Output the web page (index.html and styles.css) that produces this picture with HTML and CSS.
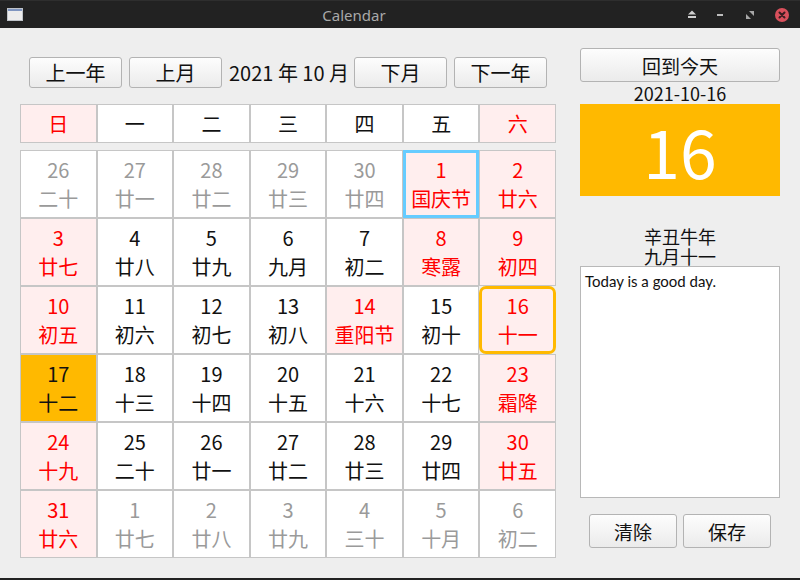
FILE: index.html
```html
<!DOCTYPE html>
<html lang="zh">
<head>
<meta charset="utf-8">
<title>Calendar</title>
<link rel="stylesheet" href="styles.css">
</head>
<body>
<div class="titlebar">
  <div class="app-icon">
    <svg width="16" height="13" viewBox="0 0 16 13"><rect x="0.5" y="0.5" width="15" height="12" fill="#ececec" stroke="#bfc3c9"/><rect x="1" y="1" width="14" height="2" fill="#7f95c0"/></svg>
  </div>
  <div class="title">Calendar</div>
  <div class="controls">
    <div class="ctl ctl-eject"><svg width="10" height="9" viewBox="0 0 10 9"><polygon points="1,4.5 5,0.5 9,4.5" fill="#cfcfcf"/><rect x="1" y="6" width="8" height="2" fill="#cfcfcf"/></svg></div>
    <div class="ctl ctl-min"><svg width="8" height="4" viewBox="0 0 8 4"><rect x="1" y="1" width="6" height="2" fill="#bdbdbd"/></svg></div>
    <div class="ctl ctl-max"><svg width="8" height="8" viewBox="0 0 8 8"><polygon points="3,0 8,0 8,5" fill="#a8a8a8"/><polygon points="0,3 0,8 5,8" fill="#a8a8a8"/></svg></div>
    <div class="ctl ctl-close"><svg width="16" height="16" viewBox="0 0 16 16"><circle cx="8" cy="8" r="7" fill="#d9505c"/><path d="M5.5 5.5 L10.5 10.5 M10.5 5.5 L5.5 10.5" stroke="#3a1d20" stroke-width="2" stroke-linecap="round"/></svg></div>
  </div>
</div>

<div class="window">
  <div class="left">
    <div class="nav">
      <button class="btn">上一年</button>
      <button class="btn">上月</button>
      <div class="month-label">2021 年 10 月</div>
      <button class="btn">下月</button>
      <button class="btn">下一年</button>
    </div>
    <div class="weekdays">
      <div class="wd weekend">日</div>
      <div class="wd">一</div>
      <div class="wd">二</div>
      <div class="wd">三</div>
      <div class="wd">四</div>
      <div class="wd">五</div>
      <div class="wd weekend">六</div>
    </div>
    <div class="grid">
      <div class="cell other"><span>26</span><span>二十</span></div>
      <div class="cell other"><span>27</span><span>廿一</span></div>
      <div class="cell other"><span>28</span><span>廿二</span></div>
      <div class="cell other"><span>29</span><span>廿三</span></div>
      <div class="cell other"><span>30</span><span>廿四</span></div>
      <div class="cell red selected"><span>1</span><span>国庆节</span></div>
      <div class="cell red"><span>2</span><span>廿六</span></div>

      <div class="cell red"><span>3</span><span>廿七</span></div>
      <div class="cell"><span>4</span><span>廿八</span></div>
      <div class="cell"><span>5</span><span>廿九</span></div>
      <div class="cell"><span>6</span><span>九月</span></div>
      <div class="cell"><span>7</span><span>初二</span></div>
      <div class="cell red"><span>8</span><span>寒露</span></div>
      <div class="cell red"><span>9</span><span>初四</span></div>

      <div class="cell red"><span>10</span><span>初五</span></div>
      <div class="cell"><span>11</span><span>初六</span></div>
      <div class="cell"><span>12</span><span>初七</span></div>
      <div class="cell"><span>13</span><span>初八</span></div>
      <div class="cell red"><span>14</span><span>重阳节</span></div>
      <div class="cell"><span>15</span><span>初十</span></div>
      <div class="cell red today"><span>16</span><span>十一</span></div>

      <div class="cell picked"><span>17</span><span>十二</span></div>
      <div class="cell"><span>18</span><span>十三</span></div>
      <div class="cell"><span>19</span><span>十四</span></div>
      <div class="cell"><span>20</span><span>十五</span></div>
      <div class="cell"><span>21</span><span>十六</span></div>
      <div class="cell"><span>22</span><span>十七</span></div>
      <div class="cell red"><span>23</span><span>霜降</span></div>

      <div class="cell red"><span>24</span><span>十九</span></div>
      <div class="cell"><span>25</span><span>二十</span></div>
      <div class="cell"><span>26</span><span>廿一</span></div>
      <div class="cell"><span>27</span><span>廿二</span></div>
      <div class="cell"><span>28</span><span>廿三</span></div>
      <div class="cell"><span>29</span><span>廿四</span></div>
      <div class="cell red"><span>30</span><span>廿五</span></div>

      <div class="cell red"><span>31</span><span>廿六</span></div>
      <div class="cell other"><span>1</span><span>廿七</span></div>
      <div class="cell other"><span>2</span><span>廿八</span></div>
      <div class="cell other"><span>3</span><span>廿九</span></div>
      <div class="cell other"><span>4</span><span>三十</span></div>
      <div class="cell other"><span>5</span><span>十月</span></div>
      <div class="cell other"><span>6</span><span>初二</span></div>
    </div>
  </div>

  <div class="right">
    <button class="btn today-btn">回到今天</button>
    <div class="date">2021-10-16</div>
    <div class="bigday">16</div>
    <div class="lunar">辛丑牛年<br>九月十一</div>
    <div class="note">Today is a good day.</div>
    <div class="actions">
      <button class="btn">清除</button>
      <button class="btn">保存</button>
    </div>
  </div>
</div>
<div class="frame-bottom"></div>
</body>
</html>
```

FILE: styles.css
```css
* { box-sizing: border-box; }
html, body { margin: 0; padding: 0; }
body {
  width: 800px;
  height: 580px;
  background: #eeeeee;
  font-family: "Noto Sans CJK SC", "Noto Sans", sans-serif;
  color: #111;
  display: flex;
  flex-direction: column;
  overflow: hidden;
}

/* title bar */
.titlebar {
  height: 28px;
  flex: none;
  background: #222222;
  border-top: 1px solid #2e2e2e;
  display: flex;
  align-items: center;
}
.app-icon { width: 30px; padding-left: 7px; display: flex; align-items: center; }
.title {
  flex: 1;
  text-align: center;
  color: #a9a9a9;
  font-family: "Noto Sans", sans-serif;
  font-size: 15px;
}
.controls { width: 122px; display: flex; align-items: center; height: 27px; }
.ctl { height: 27px; display: flex; align-items: center; justify-content: center; }
.ctl-eject, .ctl-min { width: 28px; }
.ctl-max, .ctl-close { width: 32px; }

/* main */
.window {
  flex: 1;
  display: flex;
  gap: 24px;
  padding: 0 20px;
}
.frame-bottom { height: 2px; flex: none; background: #222222; }

.left {
  width: 536px;
  padding-top: 29px;
  display: flex;
  flex-direction: column;
}

.btn {
  border: 1px solid #b3b3b3;
  border-radius: 3px;
  background: linear-gradient(#fdfdfd, #ebebeb);
  font-family: inherit;
  color: #111;
  padding: 0;
  display: flex;
  align-items: center;
  justify-content: center;
  line-height: 1;
}

.nav {
  display: flex;
  justify-content: center;
  align-items: center;
  gap: 7px;
  height: 31px;
}
.nav .btn { width: 93px; height: 31px; font-size: 20px; }
.month-label { width: 118px; text-align: center; font-size: 20px; white-space: nowrap; }

.weekdays {
  margin-top: 16px;
  display: grid;
  grid-template-columns: repeat(7, 1fr);
  height: 39px;
}
.wd {
  border: 1px solid #c6c6c6;
  background: #ffffff;
  display: flex;
  align-items: center;
  justify-content: center;
  font-size: 20px;
}
.wd.weekend { background: #ffeeee; color: #ff0000; }

.grid {
  margin-top: 7px;
  display: grid;
  grid-template-columns: repeat(7, 1fr);
  grid-template-rows: repeat(6, 68px);
}
.cell {
  border: 1px solid #c6c6c6;
  background: #ffffff;
  display: flex;
  flex-direction: column;
  align-items: center;
  justify-content: center;
  font-size: 20px;
  line-height: 29px;
  color: #111;
}
.cell.red { background: #ffeeee; color: #ff0000; }
.cell.other { background: #ffffff; color: #9a9a9a; }
.cell.selected { border: 3px solid #66ccff; }
.cell.today { border: 3px solid #ffb900; border-radius: 7px; }
.cell.picked { background: #ffb900; color: #111; }

/* right panel */
.right {
  width: 200px;
  display: flex;
  flex-direction: column;
}
.today-btn { margin-top: 20px; height: 34px; width: 200px; font-size: 19px; }
.date { height: 21px; line-height: 20px; text-align: center; font-size: 18px; margin-top: 1px; }
.bigday {
  height: 92px;
  background: #ffb900;
  color: #ffffff;
  font-size: 66px;
  display: flex;
  align-items: center;
  justify-content: center;
}
.lunar { margin-top: 30px; font-size: 18px; line-height: 20px; text-align: center; }
.note {
  height: 232px;
  border: 1px solid #b8b8b8;
  background: #ffffff;
  font-family: Lato, "Noto Sans", sans-serif;
  font-size: 15px;
  padding: 5px 4px;
  color: #111;
}
.actions { margin-top: 16px; display: flex; justify-content: center; gap: 6px; }
.actions .btn { width: 88px; height: 34px; font-size: 19px; }
```
